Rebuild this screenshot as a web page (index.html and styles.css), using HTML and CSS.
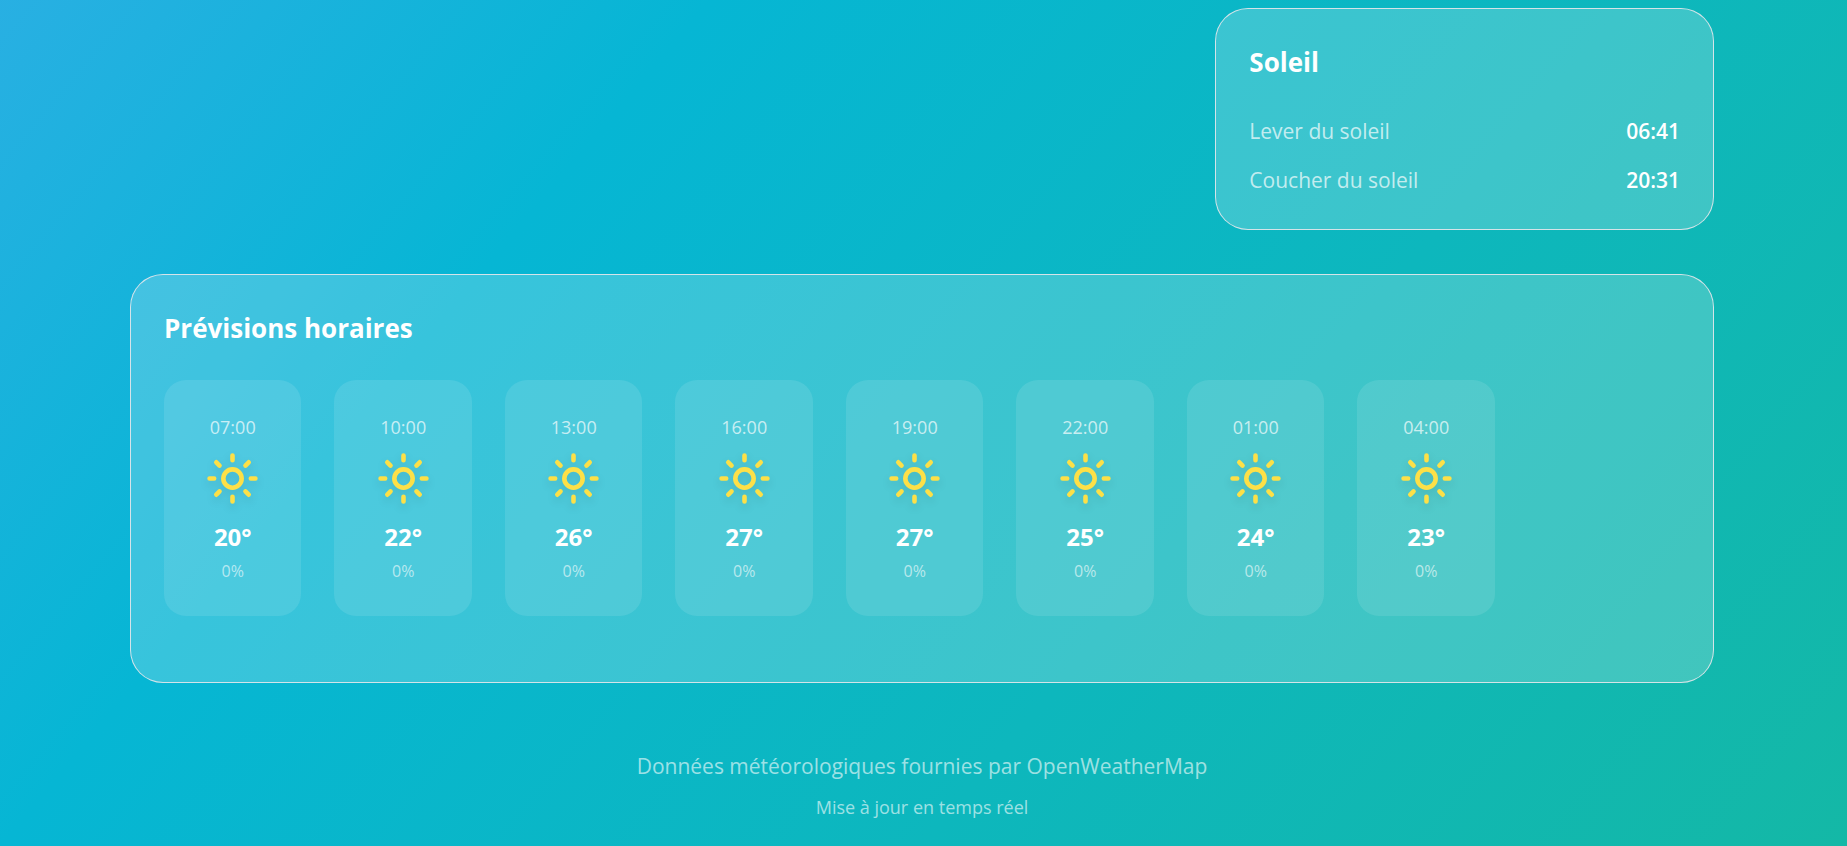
FILE: index.html
```html
<!DOCTYPE html>
<html lang="fr">
<head>
<meta charset="utf-8">
<title>Météo</title>
<link rel="stylesheet" href="styles.css">
</head>
<body>
<svg class="sprite" aria-hidden="true">
  <symbol id="sun" viewBox="0 0 24 24">
    <circle cx="12" cy="12" r="4"/>
    <path d="M12 2v2M12 20v2M4.93 4.93l1.41 1.41M17.66 17.66l1.41 1.41M2 12h2M20 12h2M6.34 17.66l-1.41 1.41M19.07 4.93l-1.41 1.41"/>
  </symbol>
</svg>
<div class="page">
  <main class="content">
    <section class="card sun-card">
      <h2 class="title">Soleil</h2>
      <dl class="facts">
        <div class="fact"><dt>Lever du soleil</dt><dd>06:41</dd></div>
        <div class="fact"><dt>Coucher du soleil</dt><dd>20:31</dd></div>
      </dl>
    </section>
    <section class="card hourly-card">
      <h2 class="title">Prévisions horaires</h2>
      <ul class="hours">
        <li class="hour"><span class="time">07:00</span><svg class="icon"><use href="#sun"/></svg><span class="temp">20°</span><span class="rain">0%</span></li>
        <li class="hour"><span class="time">10:00</span><svg class="icon"><use href="#sun"/></svg><span class="temp">22°</span><span class="rain">0%</span></li>
        <li class="hour"><span class="time">13:00</span><svg class="icon"><use href="#sun"/></svg><span class="temp">26°</span><span class="rain">0%</span></li>
        <li class="hour"><span class="time">16:00</span><svg class="icon"><use href="#sun"/></svg><span class="temp">27°</span><span class="rain">0%</span></li>
        <li class="hour"><span class="time">19:00</span><svg class="icon"><use href="#sun"/></svg><span class="temp">27°</span><span class="rain">0%</span></li>
        <li class="hour"><span class="time">22:00</span><svg class="icon"><use href="#sun"/></svg><span class="temp">25°</span><span class="rain">0%</span></li>
        <li class="hour"><span class="time">01:00</span><svg class="icon"><use href="#sun"/></svg><span class="temp">24°</span><span class="rain">0%</span></li>
        <li class="hour"><span class="time">04:00</span><svg class="icon"><use href="#sun"/></svg><span class="temp">23°</span><span class="rain">0%</span></li>
      </ul>
    </section>
  </main>
  <footer class="footer">
    <p class="source">Données météorologiques fournies par OpenWeatherMap</p>
    <p class="update">Mise à jour en temps réel</p>
  </footer>
</div>
</body>
</html>
```
FILE: styles.css
```css
* {
  box-sizing: border-box;
  margin: 0;
  padding: 0;
}

body {
  font-family: "Segoe UI", "Open Sans", "Noto Sans", sans-serif;
  font-size: 21px;
  line-height: 32px;
  color: #fff;
}

.sprite {
  position: absolute;
  width: 0;
  height: 0;
}

.page {
  min-height: 100vh;
  padding: 8px 133px 16px 130px;
  background: linear-gradient(to bottom right, #60a5fa, #06b6d4, #14b8a6) bottom / 100% 260%;
}

.content {
  display: grid;
  grid-template-columns: repeat(3, 1fr);
  gap: 44px;
}

.card {
  padding: 33px;
  border: 1px solid rgba(229, 231, 235, 0.9);
  border-radius: 33px;
  background: rgba(255, 255, 255, 0.2);
}

.sun-card {
  grid-column: 3;
}

.hourly-card {
  grid-column: 1 / -1;
  padding-bottom: 66px;
}

.title {
  font-size: 26px;
  font-weight: 700;
  line-height: 40px;
}

.facts {
  display: grid;
  gap: 17px;
  margin-top: 33px;
}

.fact {
  display: flex;
  justify-content: space-between;
}

.fact dt {
  color: rgba(255, 255, 255, 0.7);
}

.fact dd {
  font-weight: 600;
}

.hours {
  display: grid;
  grid-template-columns: repeat(8, 1fr);
  gap: 33px;
  margin-top: 32px;
  padding-right: 185px;
  list-style: none;
}

.hour {
  display: flex;
  flex-direction: column;
  align-items: center;
  padding: 33px 0;
  border-radius: 22px;
  background: rgba(255, 255, 255, 0.1);
}

.time {
  font-size: 18px;
  line-height: 28px;
  color: rgba(255, 255, 255, 0.7);
}

.icon {
  width: 55px;
  height: 55px;
  margin: 10px 0 13px;
  fill: none;
  stroke: #fde047;
  stroke-width: 2;
  stroke-linecap: round;
  stroke-linejoin: round;
  filter: drop-shadow(0 4px 4px rgba(0, 0, 0, 0.12));
}

.temp {
  font-size: 24px;
  font-weight: 700;
  line-height: 36px;
}

.rain {
  margin-top: 4px;
  font-size: 16px;
  line-height: 24px;
  color: rgba(255, 255, 255, 0.6);
}

.footer {
  padding-top: 67px;
  text-align: center;
  color: rgba(255, 255, 255, 0.6);
}

.update {
  margin-top: 11px;
  font-size: 18px;
  line-height: 28px;
}
```
